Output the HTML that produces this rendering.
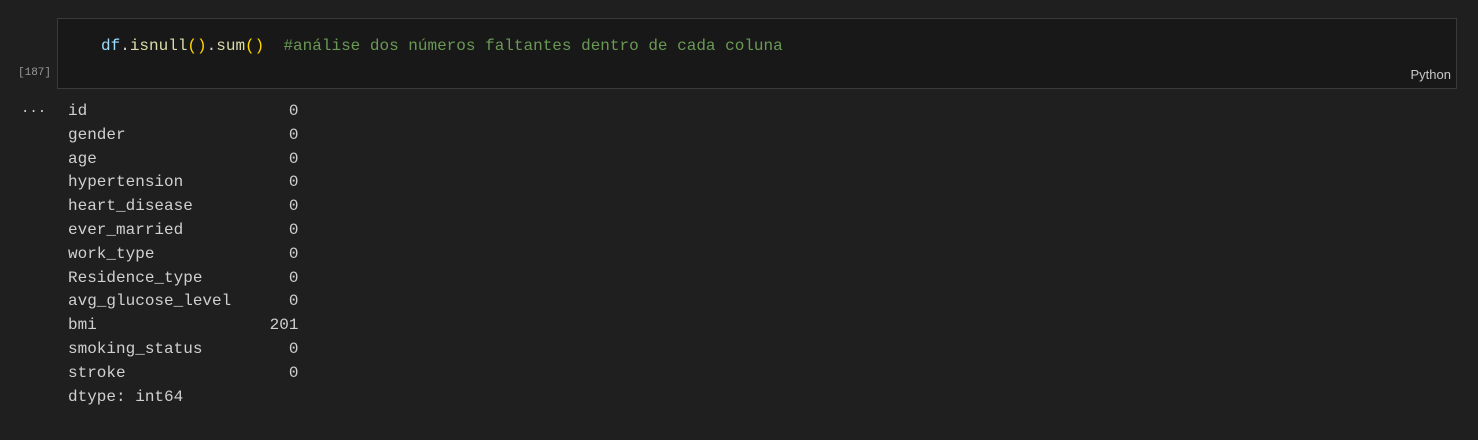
<!DOCTYPE html>
<html><head><style>
html,body{margin:0;padding:0;background:#1f1f1f;width:1478px;height:440px;overflow:hidden;font-family:"Liberation Mono",monospace;}
.cell{position:absolute;left:57px;top:18px;width:1398px;height:69px;background:#181818;border:1px solid #3a3a3a;}
.code{position:absolute;left:101px;top:35px;font-size:16px;line-height:22px;color:#d4d4d4;white-space:pre;}
.py{position:absolute;right:27px;top:67px;font-family:"Liberation Sans",sans-serif;font-size:13px;color:#c8c8c8;}
.num{position:absolute;left:18px;top:67px;font-size:11px;color:#9a9a9a;}
.dots{position:absolute;left:21px;top:104px;font-size:14px;color:#ccc;}
.out{position:absolute;left:68px;top:100px;font-size:16px;line-height:23.8px;color:#d0d0d0;white-space:pre;}
</style></head><body>
<div class="cell"></div>
<div class="code"><span style="color:#9cdcfe">df</span>.<span style="color:#dcdcaa">isnull</span><span style="color:#ffd700">()</span>.<span style="color:#dcdcaa">sum</span><span style="color:#ffd700">()</span>  <span style="color:#6a9955">#análise dos números faltantes dentro de cada coluna</span></div>
<div class="num">[187]</div>
<div class="py">Python</div>
<div class="dots">···</div>
<div class="out">id                     0
gender                 0
age                    0
hypertension           0
heart_disease          0
ever_married           0
work_type              0
Residence_type         0
avg_glucose_level      0
bmi                  201
smoking_status         0
stroke                 0
dtype: int64</div>
</body></html>
